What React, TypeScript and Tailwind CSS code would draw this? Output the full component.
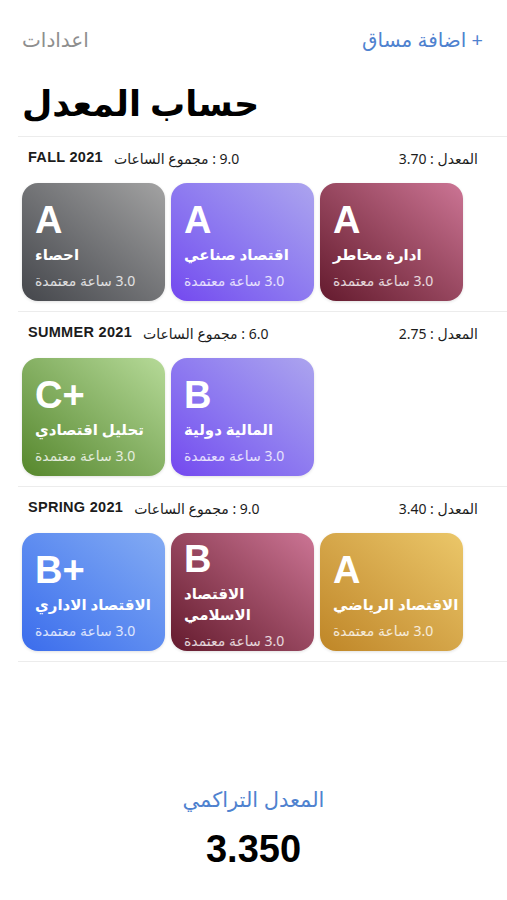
type Course = { grade: string; name: string; bg: string };

type Term = {
  title: string;
  hours: string;
  gpa: string;
  courses: Course[];
};

const terms: Term[] = [
  {
    title: "FALL 2021",
    hours: "9.0",
    gpa: "3.70",
    courses: [
      { grade: "A", name: "احصاء", bg: "bg-linear-to-tr from-[#45474c] to-[#a3a3a3]" },
      { grade: "A", name: "اقتصاد صناعي", bg: "bg-linear-to-tr from-[#7447ef] to-[#aca4ee]" },
      { grade: "A", name: "ادارة مخاطر", bg: "bg-linear-to-tr from-[#641a2e] to-[#cc7595]" },
    ],
  },
  {
    title: "SUMMER 2021",
    hours: "6.0",
    gpa: "2.75",
    courses: [
      { grade: "C+", name: "تحليل اقتصادي", bg: "bg-linear-to-tr from-[#56872b] to-[#b6da98]" },
      { grade: "B", name: "المالية دولية", bg: "bg-linear-to-tr from-[#7447ef] to-[#aca4ee]" },
    ],
  },
  {
    title: "SPRING 2021",
    hours: "9.0",
    gpa: "3.40",
    courses: [
      { grade: "B+", name: "الاقتصاد الاداري", bg: "bg-linear-to-tr from-[#3b6cec] to-[#84abf3]" },
      { grade: "B", name: "الاقتصاد\nالاسلامي", bg: "bg-linear-to-tr from-[#641a2e] to-[#cc7595]" },
      { grade: "A", name: "الاقتصاد الرياضي", bg: "bg-linear-to-tr from-[#bf8626] to-[#ebc769]" },
    ],
  },
];

const arabic = "font-['Noto_Sans','DejaVu_Sans',sans-serif]";

function CourseCard({ course }: { course: Course }) {
  return (
    <div
      className={`flex h-[118px] w-[143px] flex-col justify-center rounded-[16px] pl-[13px] pr-[4px] pt-[6px] text-white shadow-[0_1px_3px_rgba(0,0,0,0.12)] ${course.bg}`}
    >
      <div className="font-['Liberation_Sans',sans-serif] text-[38px] font-bold leading-[40px]">
        {course.grade}
      </div>
      <div
        dir="rtl"
        className={`mt-[4px] whitespace-pre-line text-left text-[15px] font-bold leading-[21px] ${arabic}`}
      >
        {course.name}
      </div>
      <div
        dir="rtl"
        className={`mt-[6px] text-left text-[14px] leading-[20px] text-white/80 ${arabic}`}
      >
        3.0 ساعة معتمدة
      </div>
    </div>
  );
}

function TermSection({ term }: { term: Term }) {
  return (
    <section className="ml-[18px] border-t border-[#ececec] pb-[10px] pt-[11px]">
      {/* term header */}
      <div className="flex h-[20px] items-center justify-between pl-[10px] pr-[29px] text-[14px] text-[#1c1c1c]">
        <div className="flex items-center gap-[11px]">
          <span className="font-['Liberation_Sans',sans-serif] text-[14.5px] font-bold tracking-[0.3px]">
            {term.title}
          </span>
          <span dir="rtl" className={arabic}>
            {term.hours} : مجموع الساعات
          </span>
        </div>
        <span dir="rtl" className={arabic}>
          المعدل : {term.gpa}
        </span>
      </div>

      {/* courses */}
      <div className="mt-[15px] flex gap-[6px] pl-[4px]">
        {term.courses.map((c, i) => (
          <CourseCard key={i} course={c} />
        ))}
      </div>
    </section>
  );
}

export default function App() {
  return (
    <div className={`min-h-[900px] w-[507px] bg-white ${arabic}`}>
      {/* top bar */}
      <div className="mt-[29px] flex h-[22px] items-center justify-between pl-[22px] pr-[24px] text-[20px]">
        <button className="text-[#8e8e8e]">اعدادات</button>
        <button dir="rtl" className="text-[#4f82cf]">
          + اضافة مساق
        </button>
      </div>

      <h1 className="mb-[11px] mt-[30px] pl-[22px] text-[35px] font-bold leading-[44px] text-black">
        حساب المعدل
      </h1>

      {terms.map((t) => (
        <TermSection key={t.title} term={t} />
      ))}
      <div className="ml-[18px] border-t border-[#ececec]" />

      {/* cumulative */}
      <div className="mt-[124px] flex flex-col items-center">
        <div className="text-[21px] leading-[26px] text-[#4f82cf]">المعدل التراكمي</div>
        <div className="mt-[17px] font-['Liberation_Sans',sans-serif] text-[38px] font-bold leading-[40px] text-black">
          3.350
        </div>
      </div>
    </div>
  );
}
